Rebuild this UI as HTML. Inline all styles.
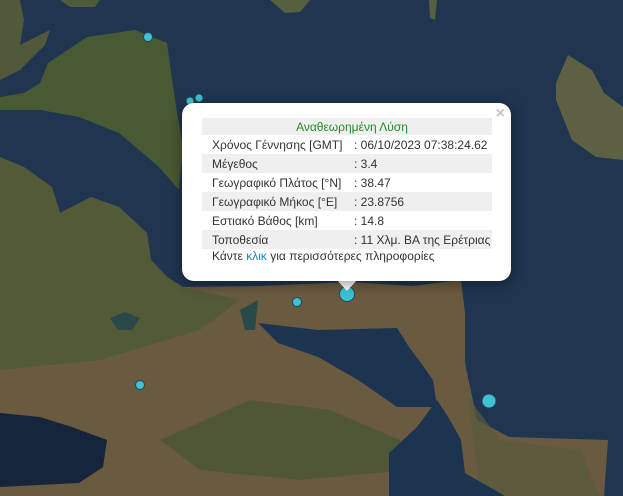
<!DOCTYPE html>
<html><head><meta charset="utf-8"><style>
html,body{margin:0;padding:0;width:623px;height:496px;overflow:hidden;background:#1f3550;font-family:"Liberation Sans",Arial,sans-serif}
svg{position:absolute;left:0;top:0}
.pop{position:absolute;left:182px;top:103px;width:329px;height:178px;background:#fff;border-radius:12px;box-shadow:0 3px 14px rgba(0,0,0,.4)}
.tip{position:absolute;left:336px;top:279px;width:0;height:0;border-left:11px solid transparent;border-right:11px solid transparent;border-top:12px solid #fff}
.x{position:absolute;right:6px;top:2px;font:bold 16px "Liberation Sans",sans-serif;color:#c3c3c3}
table{position:absolute;left:20px;top:15px;border-collapse:collapse;font-size:12px;color:#333;width:290px;table-layout:fixed}
td{height:19px;padding:0 0 0 10px;white-space:nowrap;vertical-align:middle;overflow:hidden}
tr.g td{background:#efefef}
td.v{padding-left:0}
.h td{text-align:center;color:#228b22;height:17px}
.f{position:absolute;left:30px;top:146px;font-size:12px;color:#333}
.f span{color:#1e88b8}
</style></head><body>
<svg width="623" height="496" viewBox="0 0 623 496">
<rect width="623" height="496" fill="#1f3550"/>
<polygon points="0,0 20,0 24,20 20,45 50,30 45,45 20,70 0,80" fill="#52583a"/>
<polygon points="60,0 100,0 95,7 70,7" fill="#4e5a3a"/>
<polygon points="270,0 310,0 300,12 285,13" fill="#55603f"/>
<polygon points="429,0 437,0 435,20 430,18" fill="#55603f"/>
<polygon points="48,63 87,37 135,30 167,43 175,100 183,147 179,190 159,167 119,133 79,117 40,110 0,110 0,97 24,93 40,83" fill="#485a33"/>
<polygon points="556,83 568,55 592,70 604,93 623,107 623,160 596,157 572,140 556,100" fill="#5d6042"/>
<polygon points="0,157 24,167 52,187 60,213 91,197 119,207 147,233 151,260 167,277 183,287 260,286 350,282 413,286 461,280 465,313 465,363 477,420 509,437 608,440 604,496 0,496" fill="#6a5b40"/>
<polygon points="0,157 24,167 52,187 60,213 91,197 119,207 147,233 151,260 167,277 183,287 240,300 200,330 100,360 0,370" fill="#4f5a36" opacity=".85"/>
<polygon points="160,440 250,400 330,410 400,440 410,470 300,480 200,470" fill="#4a5633" opacity=".8"/>
<polygon points="461,330 470,400 500,440 580,450 600,496 480,496" fill="#5a5a3c" opacity=".7"/>
<polygon points="258,323 318,330 397,328 409,347 421,363 433,380 437,407 397,407 358,380 318,357 278,343" fill="#1d3451"/>
<polygon points="437,400 417,427 389,453 389,496 505,496 465,473 461,440 450,420" fill="#1d3451"/>
<polygon points="0,413 40,417 72,427 107,440 103,467 79,483 0,487" fill="#16243c"/>
<polygon points="110,318 125,312 140,318 132,330 118,330" fill="#2a4a4a"/>
<polygon points="240,310 258,300 255,330 245,330" fill="#2a4a4a"/>
<g fill="#3fc1d2" stroke="#1d4a55" stroke-width="1">
<circle cx="148" cy="37" r="4.5"/><circle cx="190" cy="101" r="4"/><circle cx="199" cy="98" r="4"/>
<circle cx="297" cy="302" r="4.5"/><circle cx="140" cy="385" r="4.5"/><circle cx="489" cy="401" r="7"/>
<circle cx="347" cy="294" r="7.5"/>
</g>
</svg>
<div class="tip"></div>
<div class="pop">
<div class="x">×</div>
<table>
<colgroup><col style="width:152px"><col style="width:138px"></colgroup>
<tr class="g h"><td colspan="2">Αναθεωρημένη Λύση</td></tr>
<tr><td>Χρόνος Γέννησης [GMT]</td><td class="v">: 06/10/2023 07:38:24.62</td></tr>
<tr class="g"><td>Μέγεθος</td><td class="v">: 3.4</td></tr>
<tr><td>Γεωγραφικό Πλάτος [°N]</td><td class="v">: 38.47</td></tr>
<tr class="g"><td>Γεωγραφικό Μήκος [°E]</td><td class="v">: 23.8756</td></tr>
<tr><td>Εστιακό Βάθος [km]</td><td class="v">: 14.8</td></tr>
<tr class="g"><td>Τοποθεσία</td><td class="v">: 11 Χλμ. ΒΑ της Ερέτριας</td></tr>
</table>
<div class="f">Κάντε <span>κλικ</span> για περισσότερες πληροφορίες</div>
</div>
</body></html>
